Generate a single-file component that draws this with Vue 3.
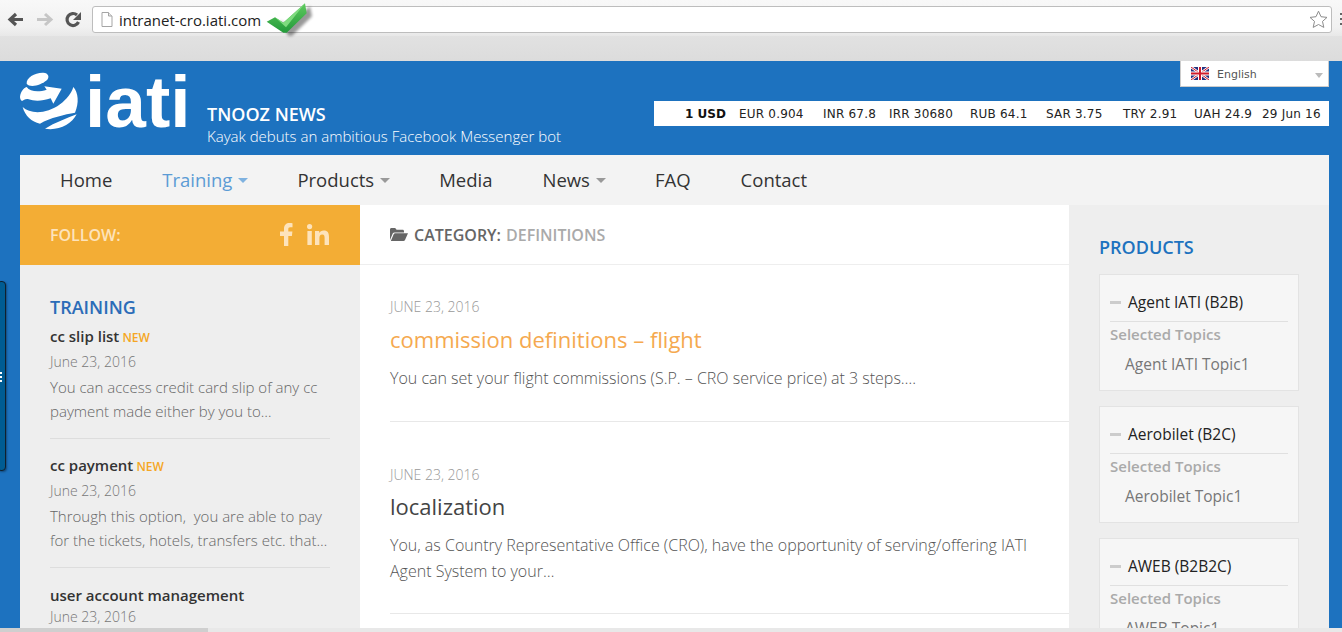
<script setup>
const rates = [
  { t: '1 USD', w: 54, b: true, ml: 31 },
  { t: 'EUR 0.904', w: 84 },
  { t: 'INR 67.8', w: 66 },
  { t: 'IRR 30680', w: 81 },
  { t: 'RUB 64.1', w: 76 },
  { t: 'SAR 3.75', w: 77 },
  { t: 'TRY 2.91', w: 71 },
  { t: 'UAH 24.9', w: 68 },
  { t: '29 Jun 16', w: 62 }
]
const nav = [
  { t: 'Home' },
  { t: 'Training', active: true, caret: true },
  { t: 'Products', caret: true },
  { t: 'Media' },
  { t: 'News', caret: true },
  { t: 'FAQ' },
  { t: 'Contact' }
]
const training = [
  { t: 'cc slip list', isNew: true, d: 'June 23, 2016', x: ['You can access credit card slip of any cc', 'payment made either by you to…'] },
  { t: 'cc payment', isNew: true, d: 'June 23, 2016', x: ['Through this option,\u00a0 you are able to pay', 'for the tickets, hotels, transfers etc. that…'] },
  { t: 'user account management', d: 'June 23, 2016', x: [] }
]
const products = [
  { t: 'Agent IATI (B2B)', s: 'Agent IATI Topic1' },
  { t: 'Aerobilet (B2C)', s: 'Aerobilet Topic1' },
  { t: 'AWEB (B2B2C)', s: 'AWEB Topic1' }
]
</script>

<template>
  <div class="page">
    <div class="chrome">
      <div class="toolbar">
        <svg class="navicons" width="92" height="36" viewBox="0 0 92 36">
          <path d="M23 19.500H11M16 14l-6 5.500 6 5.500" fill="none" stroke="#555" stroke-width="3.200"/>
          <path d="M37 19.500h13M45 14l6 5.500-6 5.500" fill="none" stroke="#c6c6c6" stroke-width="3"/>
          <path d="M78.500 22a6 6 0 1 1-1.500-7" fill="none" stroke="#555" stroke-width="3.200"/>
          <path d="M81 12v8h-8z" fill="#555"/>
        </svg>
        <div class="omnibox">
          <svg width="12" height="15" viewBox="0 0 12 15" class="docicon">
            <path d="M1 .5h6.500L11 4v10.500H1z" fill="#fff" stroke="#a5a5a5"/>
            <path d="M7.500.5V4H11" fill="#e8e8e8" stroke="#a5a5a5"/>
          </svg>
          <span class="url">intranet-cro.iati.com</span>
          <svg class="star" width="19" height="19" viewBox="0 0 19 19">
            <path d="M9.500 1.200l2.500 5.500 6 .7-4.500 4 1.300 6L9.500 14.500l-5.300 2.900 1.300-6L1 7.400l6-.7z" fill="#fff" stroke="#8c8c8c"/>
          </svg>
        </div>
      </div>
      <div class="strip"></div>
    </div>

    <svg class="check" width="56" height="42" viewBox="0 0 56 42">
      <defs>
        <filter id="checkBlur" x="-20%" y="-20%" width="140%" height="140%"><feGaussianBlur stdDeviation="1.800"/></filter>
        <linearGradient id="checkFill" x1="0" y1="0" x2="0" y2="1">
          <stop offset="0" stop-color="#5fca5f"/>
          <stop offset="1" stop-color="#239a3a"/>
        </linearGradient>
      </defs>
      <path d="M11 17.300l8.300 5.400L41 3.300l2 10-20 19.400h-3.700z" fill="#000" opacity=".4" filter="url(#checkBlur)" transform="translate(5 3)"/>
      <path d="M2.700 21.700 11 17.300l8.300 5.400L41 3.300l1.700 10-20 19.400h-3.400z" fill="url(#checkFill)"/>
      <path d="M11 17.300l8.300 5.400L41 3.300l-19 24z" fill="#7edb7e"/>
    </svg>
    <div class="menudots"></div>

    <div class="site">
      <header class="head">
        <svg class="globe" width="60" height="62" viewBox="30 20 180 186">
          <path d="M50 58C48 40 75 24 100 25c15 1 20 13 10 23C95 62 60 72 50 58z" fill="#fff"/>
          <path d="M30 97C32 82 40 72 50 68c10 14 35 17 60 8l-7-10 52 7-25 45-8-16c-25 9-50 9-66 3-8-3-16 3-20 5-4-3-6-8-6-13z" fill="#fff"/>
          <path d="M38 128c22 22 72 22 112-8 20-15 35-35 40-52 15 17 18 47 5 77-30 5-75 15-105 33-25-6-45-23-52-50z" fill="#fff"/>
          <path d="M105 193c30-18 65-31 95-43-15 30-55 50-95 43z" fill="#fff"/>
        </svg>
        <div class="wordmark">iati</div>
        <div class="news">
          <div class="news-h">TNOOZ NEWS</div>
          <div class="news-t">Kayak debuts an ambitious Facebook Messenger bot</div>
        </div>
        <div class="tools">
          <div class="lang">
            <svg class="flag" width="18" height="13" viewBox="0 0 18 13">
              <rect width="18" height="13" fill="#23307e"/>
              <path d="M0 0l18 13M18 0L0 13" stroke="#fff" stroke-width="2.500"/>
              <path d="M0 0l18 13M18 0L0 13" stroke="#cf1b2b" stroke-width="1"/>
              <path d="M9 0v13M0 6.500h18" stroke="#fff" stroke-width="4"/>
              <path d="M9 0v13M0 6.500h18" stroke="#cf1b2b" stroke-width="2"/>
            </svg>
            <span>English</span>
            <i class="lang-caret"></i>
          </div>
          <div class="rates">
            <span v-for="r in rates" :key="r.t" :class="{ strong: r.b }" :style="{ width: r.w + 'px', marginLeft: (r.ml || 0) + 'px' }">{{ r.t }}</span>
          </div>
        </div>
      </header>

      <nav class="nav">
        <a v-for="n in nav" :key="n.t" :class="{ active: n.active }">{{ n.t }}<i v-if="n.caret" class="caret"></i></a>
      </nav>

      <div class="cols">
        <aside class="left">
          <div class="follow">
            <span>FOLLOW:</span>
            <span class="social">
              <svg width="13" height="23" viewBox="0 0 13 23"><path d="M4 23V13H0V8.500h4V5.500C4 2 6.300 0 9.400 0c1.500 0 2.700.1 3.100.2v4h-2.200C8.600 4.200 8.300 5 8.300 6.200v2.300h4.100L11.900 13H8.300v10z" fill="#fde3bb"/></svg>
              <svg width="22" height="21" viewBox="0 0 22 21"><circle cx="2.600" cy="2.600" r="2.600" fill="#fde3bb"/><path d="M.4 7h4.400v14H.4zM8 7h4.200v2c.8-1.300 2.400-2.400 4.500-2.400 4.200 0 5.300 2.700 5.300 6.500V21h-4.400v-7c0-1.800-.3-3.500-2.400-3.500s-2.800 1.600-2.800 3.500v7H8z" fill="#fde3bb"/></svg>
            </span>
          </div>
          <div class="left-body">
            <h3 class="widget-h">TRAINING</h3>
            <div v-for="(a, i) in training" :key="a.t" class="post" :class="{ last: i === 2 }">
              <div class="post-t">{{ a.t }}<span v-if="a.isNew" class="new"> NEW</span></div>
              <div class="post-d">{{ a.d }}</div>
              <div class="post-xs">
                <div v-for="l in a.x" :key="l" class="post-x">{{ l }}</div>
              </div>
            </div>
          </div>
        </aside>

        <main class="main">
          <div class="cat">
            <svg width="18" height="13" viewBox="0 0 18 13"><path d="M0 12V1.500C0 .700.600 0 1.400 0h3.800l1.400 1.800h6c.8 0 1.400.6 1.400 1.400V4.500H4.500c-.8 0-1.400.4-1.800 1z" fill="#666"/><path d="M.8 13l3-7c.3-.6.8-.8 1.400-.8H18l-3 6.800c-.3.700-.8 1-1.500 1z" fill="#666"/></svg>
            <b>CATEGORY:</b> <b class="cat-name">DEFINITIONS</b>
          </div>
          <article class="art first">
            <div class="art-d">JUNE 23, 2016</div>
            <h2 class="art-h orange">commission definitions – flight</h2>
            <p>You can set your flight commissions (S.P. – CRO service price) at 3 steps….</p>
          </article>
          <article class="art">
            <div class="art-d">JUNE 23, 2016</div>
            <h2 class="art-h">localization</h2>
            <p>You, as Country Representative Office (CRO), have the opportunity of serving/offering IATI<br>Agent System to your…</p>
          </article>
        </main>

        <aside class="right">
          <h3 class="widget-h">PRODUCTS</h3>
          <div v-for="p in products" :key="p.t" class="prod">
            <div class="prod-t"><i class="dash"></i>{{ p.t }}</div>
            <div class="prod-s">Selected Topics</div>
            <div class="prod-l">{{ p.s }}</div>
          </div>
        </aside>
      </div>
    </div>

    <div class="sidetab"><i></i></div>
    <div class="hscroll"><div class="thumb"></div></div>
  </div>
</template>

<style>
html, body { margin: 0; overflow: hidden; }
</style>

<style scoped>
.page { position: relative; width: 1342px; height: 632px; overflow: hidden; font-family: "Open Sans", sans-serif; background: #1d72bf; }
.chrome { height: 61px; background: linear-gradient(#e9e9e9, #dcdcdc); }
.toolbar { height: 36px; display: flex; align-items: flex-start; background: linear-gradient(#f8f8f8, #f1f1f1 75%, #e8e8e8); }
.navicons { flex: none; }
.omnibox { width: 1240px; height: 27px; margin-top: 6px; flex: none; box-sizing: border-box; border: 1px solid #bdbdbd; border-radius: 3px; background: #fff; display: flex; align-items: center; padding-left: 8px; }
.docicon { margin-right: 6px; }
.url { font-size: 15px; color: #222; }
.star { margin-left: auto; margin-right: 3px; }
.strip { height: 25px; }
.check { position: absolute; left: 264px; top: 0; }
.menudots { position: absolute; left: 1340px; top: 13px; width: 2px; height: 13px; background: repeating-linear-gradient(#666 0 2px, transparent 2px 5px); }
.site { padding: 0 13px 0 20px; }
.head { height: 94px; display: flex; position: relative; }
.globe { flex: none; margin-top: 10px; }
.wordmark { font-family: "Liberation Sans", Arial, sans-serif; font-weight: 700; font-size: 73px; line-height: 72px; color: #fff; margin: 5px 0 0 5px; width: 102px; height: 72px; flex: none; }
.news { margin: 41px 0 0 20px; color: #fff; width: 447px; flex: none; }
.news-h { font-weight: 600; font-size: 18px; line-height: 24px; }
.news-t { font-size: 15px; line-height: 22px; font-weight: 300; margin-top: -1px; white-space: nowrap; }
.tools { flex: 1; display: flex; flex-direction: column; align-items: flex-end; }
.lang { width: 149px; height: 26px; box-sizing: border-box; background: #fff; border: 1px solid #ccc; border-top: 0; display: flex; align-items: center; padding-left: 10px; padding-top: 1px; font-family: "DejaVu Sans", sans-serif; font-size: 11px; color: #555; position: relative; }
.flag { margin-right: 8px; margin-top: -1px; }
.lang-caret { position: absolute; right: 5px; top: 12px; border: 4px solid transparent; border-top: 5px solid #bbb; border-bottom: 0; }
.rates { width: 675px; height: 25px; margin-top: 14px; background: #fff; display: flex; align-items: center; font-family: "DejaVu Sans", sans-serif; font-size: 12px; letter-spacing: .2px; color: #222; white-space: nowrap; }
.rates span { display: block; flex: none; }
.rates .strong { font-weight: 700; color: #111; letter-spacing: 0; }
.nav { height: 48px; padding-bottom: 2px; background: #f3f3f3; display: flex; align-items: center; padding-left: 40px; gap: 50px; font-size: 18.500px; font-weight: 500; color: #333; }
.nav a { display: flex; align-items: center; white-space: nowrap; }
.nav a.active { color: #5b9bd5; }
.caret { display: inline-block; margin: 3px -1px 0 6px; border: 5px solid transparent; border-top: 5px solid #999; border-bottom: 0; }
.nav a.active .caret { border-top-color: #7fb2e0; }
.cols { display: flex; height: 427px; overflow: hidden; }
.left { width: 340px; flex: none; background: #eee; }
.follow { height: 60px; background: #f3ad35; color: #fde3bb; display: flex; align-items: center; justify-content: space-between; padding: 0 31px 0 30px; font-weight: 600; font-size: 16px; }
.social { display: flex; align-items: center; gap: 14px; margin-top: -2px; }
.left-body { padding: 29px 30px 0; }
.widget-h { margin: 0; font-size: 18px; line-height: 26px; font-weight: 600; color: #2b6cb8; }
.post { border-bottom: 1px solid #ddd; padding-bottom: 15px; margin-bottom: 14px; }
.post.last { border: 0; padding-top: 3px; }
.post-t { font-size: 15px; line-height: 24px; font-weight: 600; color: #333; margin-top: 4px; }
.post.last .post-t { line-height: 20px; margin-top: 0; }
.new { color: #f5a623; font-size: 12px; }
.post-d { font-size: 14px; line-height: 24px; font-weight: 300; color: #777; }
.post-xs { margin-top: 1px; }
.post-x { font-size: 15px; line-height: 24px; font-weight: 300; color: #666; white-space: nowrap; }
.main { width: 709px; flex: none; background: #fff; }
.cat { height: 59px; border-bottom: 1px solid #eee; display: flex; align-items: center; padding-left: 30px; font-size: 16px; color: #666; gap: 5px; }
.cat svg { margin-right: 1px; }
.cat b { font-weight: 600; }
.cat-name { color: #aaa; }
.art { margin-left: 30px; border-bottom: 1px solid #e8e8e8; padding: 43px 0 29px; }
.art.first { padding: 32px 0 30px; }
.art-d { font-size: 14px; line-height: 20px; font-weight: 300; color: #999; }
.art-h { margin: 4px 0 0; font-size: 22px; line-height: 34px; font-weight: 400; color: #444; }
.first .art-h { margin-top: 5px; }
.orange { color: #f5a94f; }
.art p { margin: 9px 0 0; font-size: 16px; line-height: 26px; font-weight: 300; color: #555; }
.right { flex: 1; background: #eee; padding: 29px 30px 0; box-sizing: border-box; }
.right .widget-h { margin-bottom: 14px; color: #1d72bf; }
.prod { width: 200px; height: 117px; box-sizing: border-box; margin-bottom: 15px; background: #f6f6f6; border: 1px solid #e3e3e3; padding: 0 10px; }
.prod-t { height: 47px; box-sizing: border-box; border-bottom: 1px solid #e0e0e0; padding-top: 8px; display: flex; align-items: center; font-size: 15.500px; font-weight: 500; color: #222; }
.dash { width: 11px; height: 3px; background: #ccc; margin-right: 7px; }
.prod-s { font-size: 15px; line-height: 24px; font-weight: 600; color: #aaa; }
.prod-l { font-size: 15.500px; line-height: 30px; font-weight: 500; color: #777; padding-left: 15px; margin-top: 3px; }
.sidetab { position: absolute; left: -3px; top: 281px; width: 7px; height: 188px; background: #005c93; border: 1px solid #10202e; border-radius: 4px; box-shadow: 1px 1px 2px rgba(0, 0, 0, .35); }
.sidetab i { position: absolute; left: 2px; top: 90px; width: 2px; height: 10px; background: repeating-linear-gradient(#fff 0 2px, transparent 2px 4px); }
.hscroll { position: absolute; left: 0; right: 0; bottom: 0; height: 4px; background: #e8e8e8; }
.thumb { width: 208px; height: 4px; background: #cfcfcf; }
</style>
